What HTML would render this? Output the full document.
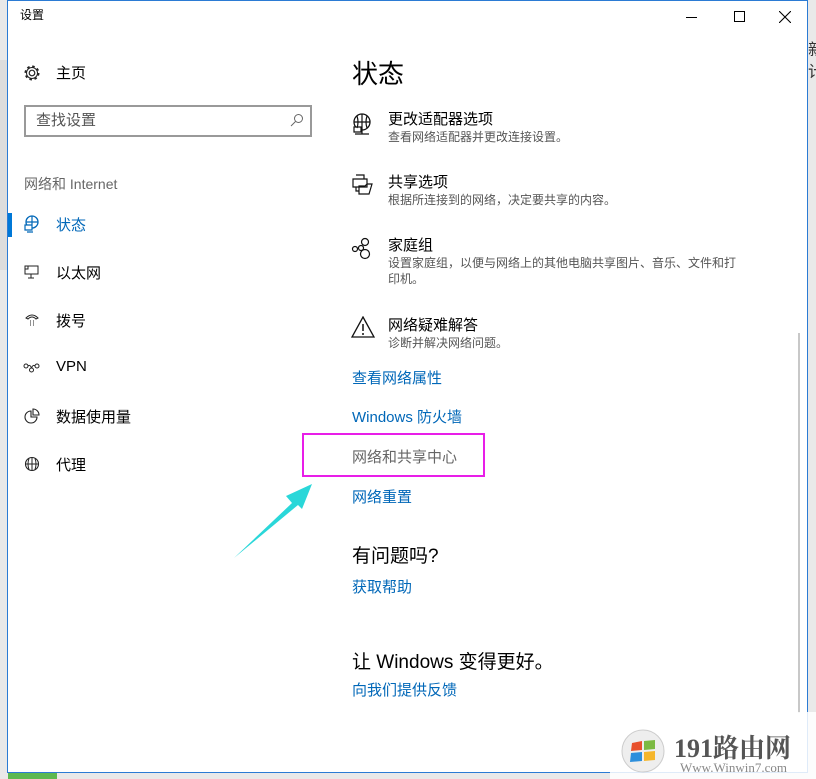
<!DOCTYPE html>
<html><head><meta charset="utf-8"><style>
*{margin:0;padding:0;box-sizing:border-box}
body{width:816px;height:779px;background:#e9e9e9;position:relative;overflow:hidden;font-family:"Liberation Sans","Noto Sans CJK SC",sans-serif;color:#000}
.win{position:absolute;left:7px;top:0;width:801px;height:773px;background:#fff;border:1px solid #2b7bd4}
.a{position:absolute;white-space:nowrap}
.x{margin-top:-2px}
.t15{font-size:15px}
.d{font-size:12px;color:#555}
.lnk{font-size:15px;color:#0067b8}
svg{position:absolute}
</style></head><body>
<div class="a" style="left:0;top:60px;width:7px;height:210px;background:#ddd"></div>
<div class="a" style="left:8px;top:773px;width:49px;height:6px;background:#5cb850"></div>
<div class="a" style="left:808px;top:40px;font-size:16px;color:#333;line-height:22px">新<br>计</div>
<div class="win">
<div class="a x" style="left:12px;top:7px;font-size:12px">设置</div>
<div class="a" style="left:678px;top:16px;width:11px;height:1px;background:#000"></div>
<div class="a" style="left:726px;top:10px;width:11px;height:11px;border:1px solid #000"></div>
<svg style="left:771px;top:10px" width="12" height="12"><path d="M0 0L12 12M12 0L0 12" stroke="#000" stroke-width="1.1"/></svg>

<svg style="left:15px;top:63px" width="18" height="18" viewBox="0 0 18 18"><circle cx="9" cy="9" r="2.8" fill="none" stroke="#222" stroke-width="1.2"/><circle cx="9" cy="9" r="6.5" fill="none" stroke="#222" stroke-width="2" stroke-dasharray="2.5 2.6"/><circle cx="9" cy="9" r="5.5" fill="none" stroke="#222" stroke-width="1"/></svg>
<div class="a t15 x" style="left:48px;top:63px">主页</div>
<div class="a" style="left:16px;top:104px;width:288px;height:32px;border:2px solid #999"></div>
<div class="a t15 x" style="left:28px;top:110px;color:#555">查找设置</div>
<svg style="left:282px;top:112px" width="14" height="14"><circle cx="8.5" cy="5.5" r="4" fill="none" stroke="#666"/><path d="M5.5 8.5L1 13" stroke="#666"/></svg>
<div class="a t15 x" style="left:16px;top:175px;color:#666;font-size:14px">网络和 Internet</div>
<div class="a" style="left:0;top:212px;width:4px;height:24px;background:#0078d7"></div>
<svg style="left:15px;top:214px" width="18" height="18" viewBox="0 0 18 18"><circle cx="9" cy="7" r="6" fill="none" stroke="#0067b8" stroke-width="1.3"/><path d="M3 7H15M9 1V13M2 10H9V15H2ZM4 17H10" stroke="#0067b8" fill="#fff" stroke-width="1.2"/></svg>
<div class="a t15 x" style="left:48px;top:215px;color:#0067b8">状态</div>
<svg style="left:16px;top:263px" width="16" height="16"><path d="M1 2H14V10H1ZM4 2V5H1M7 10V14M4 14H10" fill="none" stroke="#222"/></svg>
<div class="a t15 x" style="left:48px;top:263px">以太网</div>
<svg style="left:16px;top:311px" width="16" height="16"><path d="M2 6Q8 0 14 6L12 7Q8 3 4 7Z" fill="none" stroke="#222"/><path d="M6 9h1M9 9h1M6 11h1M9 11h1M6 13h1M9 13h1" stroke="#222"/></svg>
<div class="a t15 x" style="left:48px;top:311px">拨号</div>
<svg style="left:15px;top:360px" width="18" height="14"><circle cx="3" cy="5" r="2" fill="none" stroke="#222"/><circle cx="14" cy="5" r="2" fill="none" stroke="#222"/><circle cx="8.5" cy="9" r="2" fill="none" stroke="#222"/><path d="M5 5Q7 3 8.5 7M12 5Q10 3 8.5 7" fill="none" stroke="#222"/></svg>
<div class="a t15 x" style="left:48px;top:359px">VPN</div>
<svg style="left:16px;top:407px" width="16" height="17"><path d="M7 3A6 6 0 1 0 13 9H7Z" fill="none" stroke="#222" stroke-width="1.1"/><path d="M9 1A6 6 0 0 1 15 7H9Z" fill="none" stroke="#222" stroke-width="1.1"/></svg>
<div class="a t15 x" style="left:48px;top:407px">数据使用量</div>
<svg style="left:16px;top:455px" width="16" height="16"><circle cx="8" cy="8" r="6.5" fill="none" stroke="#222" stroke-width="1.1"/><path d="M1.5 8H14.5M8 1.5V14.5M5 2.5Q3 8 5 13.5M11 2.5Q13 8 11 13.5" fill="none" stroke="#222"/></svg>
<div class="a t15 x" style="left:48px;top:455px">代理</div>

<div class="a x" style="left:344px;top:55px;font-size:26px">状态</div>
<svg style="left:343px;top:112px" width="22" height="24" viewBox="0 0 22 24"><circle cx="11" cy="9" r="8" fill="none" stroke="#111" stroke-width="1.3"/><path d="M3 9H19M11 1V17M6 3Q8 9 6 15M16 3Q14 9 16 15M4 21H18M11 17V21M3 14H10V19H3Z" fill="#fff" stroke="#111" stroke-width="1.2"/></svg>
<div class="a t15 x" style="left:380px;top:109px">更改适配器选项</div>
<div class="a d x" style="left:380px;top:129px">查看网络适配器并更改连接设置。</div>
<svg style="left:343px;top:173px" width="22" height="22"><path d="M5 1H13V5M2 5H16V13H2ZM5 13V17H8M8 12H14L16 10H21L18 20H8Z" fill="#fff" stroke="#111" stroke-width="1.2"/></svg>
<div class="a t15 x" style="left:380px;top:172px">共享选项</div>
<div class="a d x" style="left:380px;top:192px">根据所连接到的网络，决定要共享的内容。</div>
<svg style="left:343px;top:235px" width="26" height="26"><circle cx="4" cy="13" r="2.5" fill="none" stroke="#111" stroke-width="1.2"/><circle cx="14" cy="6" r="3.5" fill="none" stroke="#111" stroke-width="1.2"/><circle cx="14" cy="18" r="4.5" fill="none" stroke="#111" stroke-width="1.2"/><circle cx="10" cy="12" r="2.5" fill="none" stroke="#111" stroke-width="1.2"/></svg>
<div class="a t15 x" style="left:380px;top:235px">家庭组</div>
<div class="a d x" style="left:380px;top:255px">设置家庭组，以便与网络上的其他电脑共享图片、音乐、文件和打</div>
<div class="a d x" style="left:380px;top:271px">印机。</div>
<svg style="left:343px;top:315px" width="24" height="22"><path d="M12 1L23 21H1Z" fill="none" stroke="#111" stroke-width="1.3"/><path d="M12 8V15M12 17V19" stroke="#111" stroke-width="1.5"/></svg>
<div class="a t15 x" style="left:380px;top:315px">网络疑难解答</div>
<div class="a d x" style="left:380px;top:335px">诊断并解决网络问题。</div>
<div class="a lnk x" style="left:344px;top:368px">查看网络属性</div>
<div class="a lnk x" style="left:344px;top:407px">Windows 防火墙</div>
<div class="a" style="left:294px;top:432px;width:183px;height:44px;border:2px solid #e81ee8"></div>
<div class="a t15 x" style="left:344px;top:447px;color:#666">网络和共享中心</div>
<div class="a lnk x" style="left:344px;top:487px">网络重置</div>
<svg style="left:224px;top:480px" width="80" height="80"><path d="M2 77L60 22L54 15L80 3L70 28L66 24Z" fill="#2ad7d9"/></svg>
<div class="a x" style="left:344px;top:542px;font-size:19px">有问题吗?</div>
<div class="a lnk x" style="left:344px;top:577px">获取帮助</div>
<div class="a x" style="left:344px;top:648px;font-size:19px">让 Windows 变得更好。</div>
<div class="a lnk x" style="left:344px;top:680px">向我们提供反馈</div>
<div class="a" style="left:790px;top:332px;width:2px;height:380px;background:#c8c8c8"></div>
</div>
<div class="a" style="left:610px;top:712px;width:206px;height:67px;background:rgba(255,255,255,.85)"></div>
<svg style="left:620px;top:729px" width="46" height="44"><circle cx="23" cy="22" r="21" fill="#eee" stroke="#ccc"/><path d="M12 14L22 12V21L11 22Z" fill="#e8502c"/><path d="M24 12L35 11V20L24 21Z" fill="#7cba42"/><path d="M11 24L22 23V32L10 33Z" fill="#2d8fdc"/><path d="M24 23L35 22V31L24 32Z" fill="#f5b62b"/></svg>
<div class="a" style="left:674px;top:728px;font-size:26px;font-weight:bold;color:#555;font-family:'Liberation Serif','Noto Serif CJK SC',serif">191路由网</div>
<div class="a" style="left:680px;top:760px;font-size:13px;color:#888;font-family:'Liberation Serif',serif">Www.Winwin7.com</div>
</body></html>
